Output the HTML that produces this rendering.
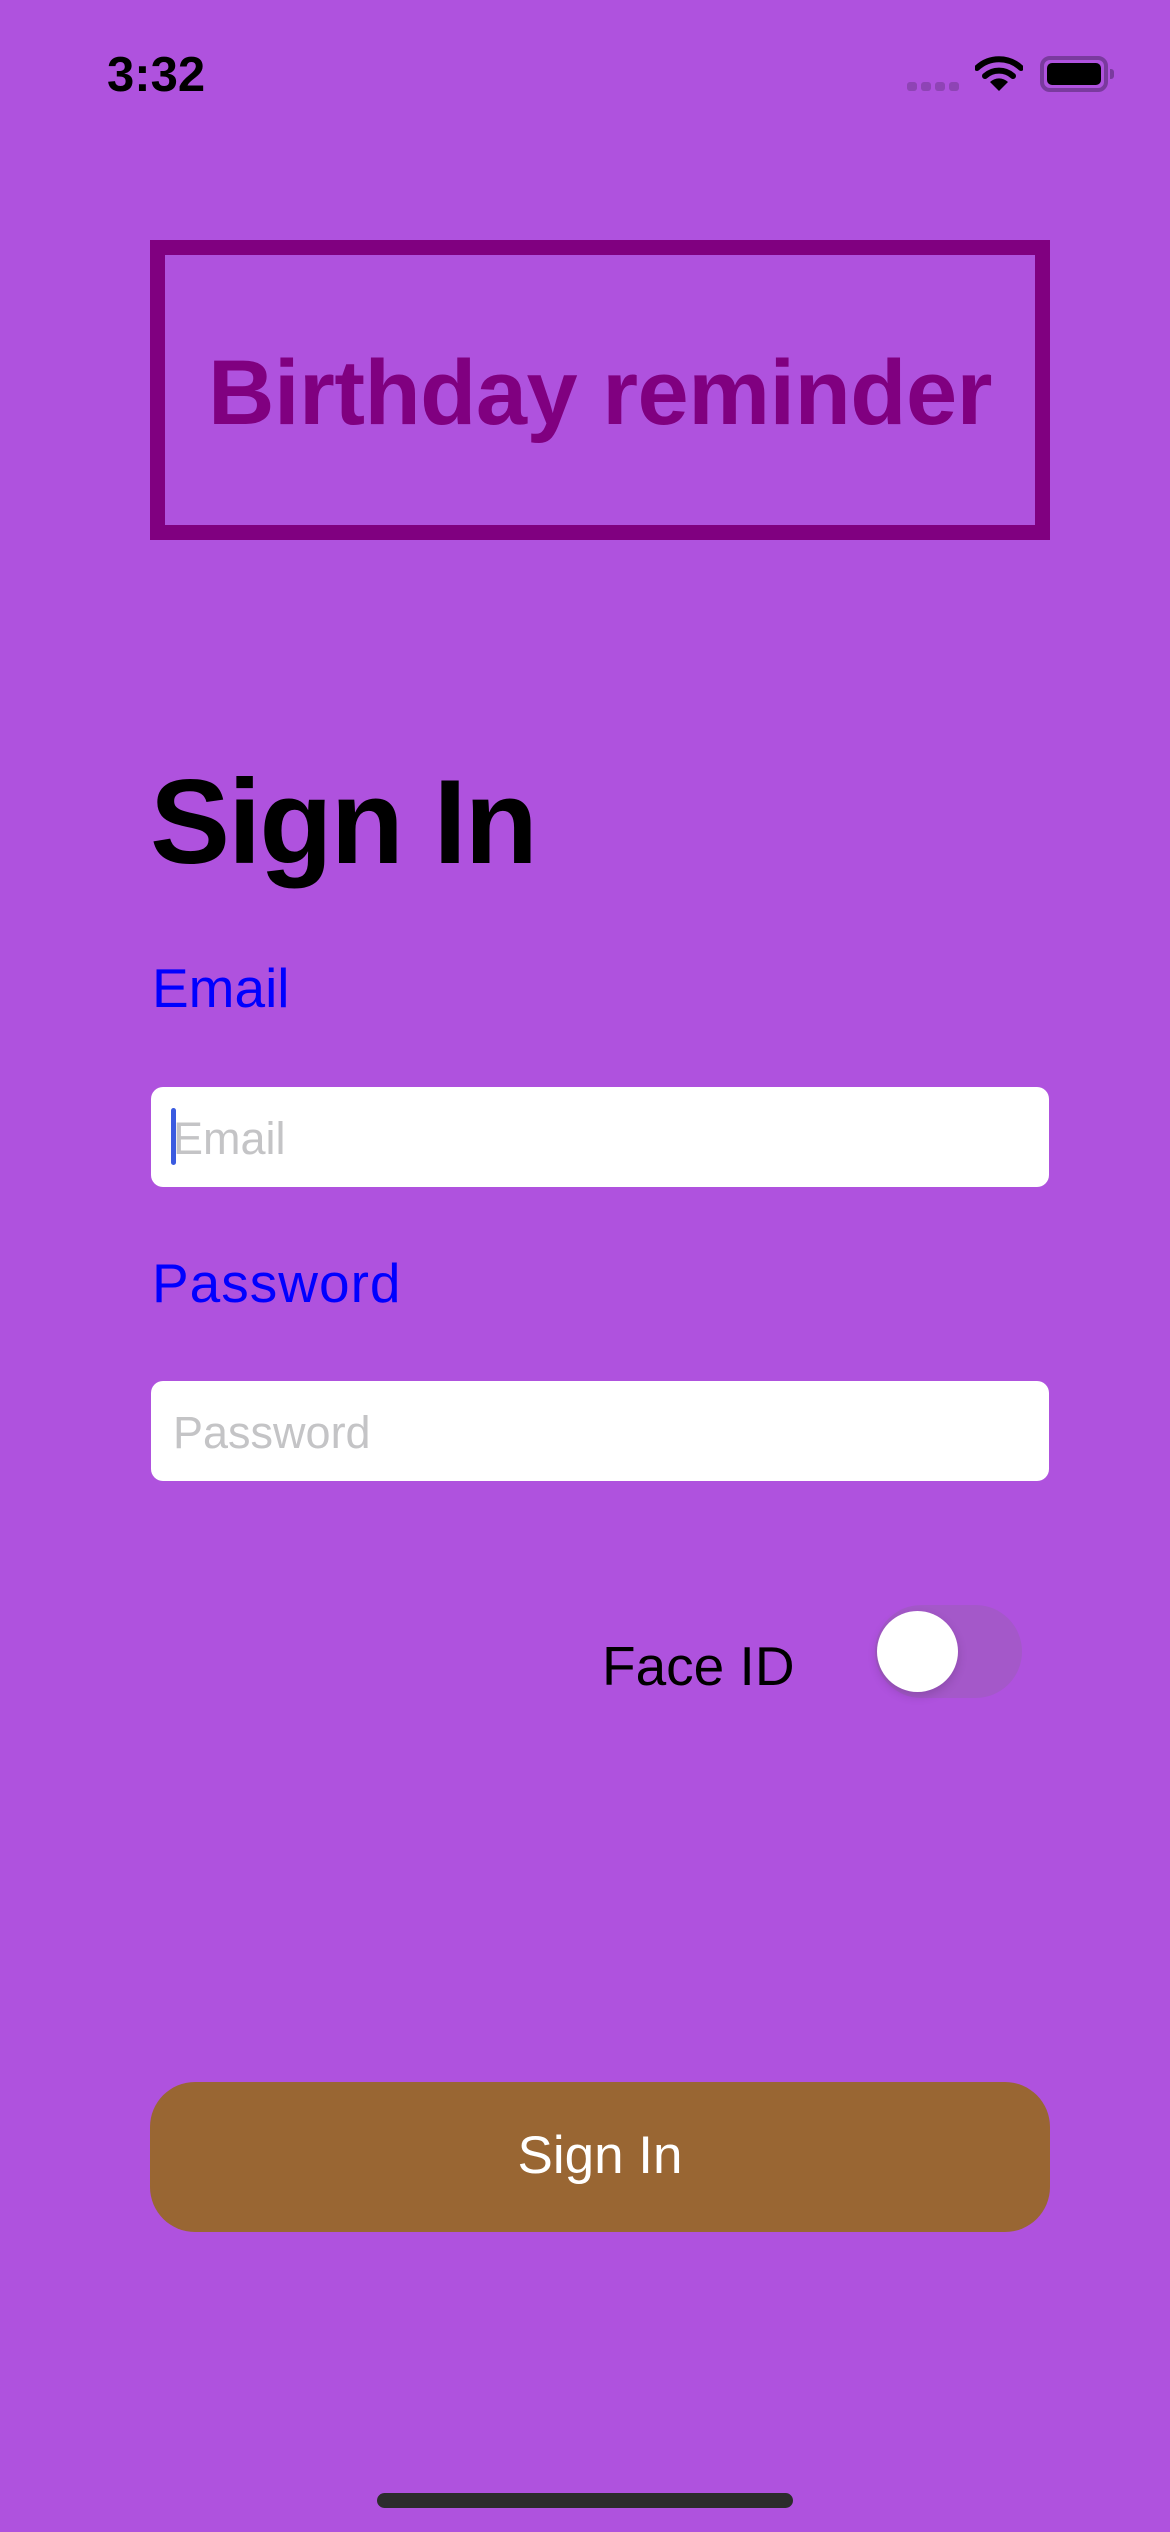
<!DOCTYPE html>
<html><head><meta charset="utf-8"><style>
*{margin:0;padding:0;box-sizing:border-box}
html,body{width:1170px;height:2532px;overflow:hidden}
body{background:#af52de;font-family:"Liberation Sans",sans-serif;position:relative}
.a{position:absolute;white-space:nowrap}
</style></head><body>
<div class="a" style="left:107px;top:47px;font-size:49px;font-weight:bold;line-height:56px;color:#000">3:32</div>
<div class="a" style="left:907px;top:82px;width:10px;height:9px;border-radius:3px;background:#8e44b5"></div>
<div class="a" style="left:921px;top:82px;width:10px;height:9px;border-radius:3px;background:#8e44b5"></div>
<div class="a" style="left:935px;top:82px;width:10px;height:9px;border-radius:3px;background:#8e44b5"></div>
<div class="a" style="left:949px;top:82px;width:10px;height:9px;border-radius:3px;background:#8e44b5"></div>
<svg class="a" style="left:975px;top:55px" width="48" height="37" viewBox="0 0 48 37">
<path d="M2 13 A32 32 0 0 1 46 13" stroke="#000" stroke-width="6" fill="none" stroke-linecap="round"/>
<path d="M10 21 A21 21 0 0 1 38 21" stroke="#000" stroke-width="6" fill="none" stroke-linecap="round"/>
<path d="M24 36 L15 27 A13 13 0 0 1 33 27 Z" fill="#000"/>
</svg>
<div class="a" style="left:1040px;top:56px;width:68px;height:36px;border:4px solid #7a3a9e;border-radius:10px"></div>
<div class="a" style="left:1047px;top:63px;width:54px;height:22px;background:#000;border-radius:5px"></div>
<div class="a" style="left:1110px;top:69px;width:4px;height:10px;background:#7a3a9e;border-radius:0 3px 3px 0"></div>

<div class="a" style="left:150px;top:240px;width:900px;height:300px;border:15px solid #800080"></div>
<div class="a" style="left:150px;width:900px;top:343px;text-align:center;font-size:92px;font-weight:bold;color:#800080;line-height:100px;letter-spacing:-0.5px">Birthday reminder</div>

<div class="a" style="left:150px;top:752px;font-size:120px;font-weight:bold;color:#000;line-height:140px;letter-spacing:-2px">Sign In</div>

<div class="a" style="left:152px;top:956px;font-size:55px;color:#0000ff;line-height:64px">Email</div>
<div class="a" style="left:151px;top:1087px;width:898px;height:100px;background:#fff;border-radius:12px"></div>
<div class="a" style="left:173px;top:1113px;font-size:45px;color:#c4c4c6;line-height:52px">Email</div>
<div class="a" style="left:171px;top:1108px;width:5px;height:57px;background:#3a5be0;border-radius:3px"></div>

<div class="a" style="left:152px;top:1251px;font-size:55px;color:#0000ff;line-height:64px;letter-spacing:1px">Password</div>
<div class="a" style="left:151px;top:1381px;width:898px;height:100px;background:#fff;border-radius:12px"></div>
<div class="a" style="left:173px;top:1407px;font-size:45px;color:#c4c4c6;line-height:52px">Password</div>

<div class="a" style="left:602px;top:1634px;font-size:55px;color:#000;line-height:64px">Face ID</div>
<div class="a" style="left:875px;top:1605px;width:147px;height:93px;border-radius:47px;background:#a458c9"></div>
<div class="a" style="left:877px;top:1611px;width:81px;height:81px;border-radius:50%;background:#fff;box-shadow:0 4px 10px rgba(0,0,0,0.15)"></div>

<div class="a" style="left:150px;top:2082px;width:900px;height:150px;border-radius:45px;background:#996633"></div>
<div class="a" style="left:150px;width:900px;top:2125px;text-align:center;font-size:53px;color:#fff;line-height:62px">Sign In</div>

<div class="a" style="left:377px;top:2493px;width:416px;height:15px;border-radius:8px;background:#2c2c2c"></div>
</body></html>
